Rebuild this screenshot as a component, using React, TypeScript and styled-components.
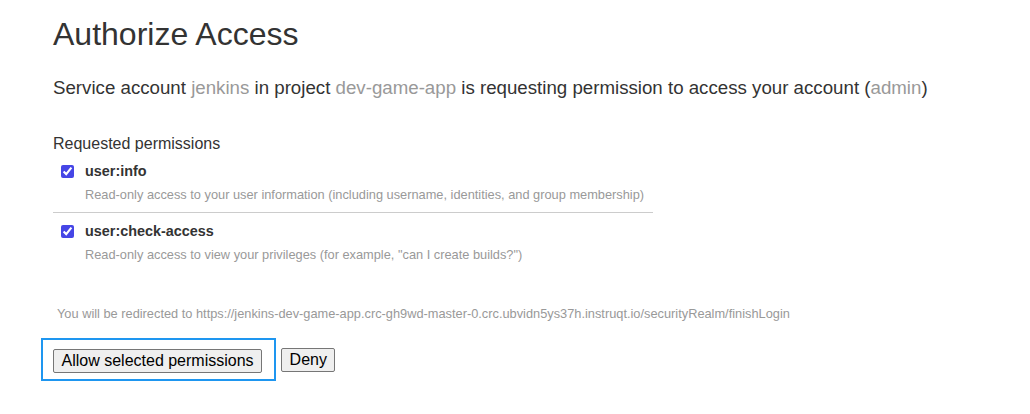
import React from "react";
import styled, { createGlobalStyle } from "styled-components";

const GlobalStyle = createGlobalStyle`
  body {
    margin: 0;
    background: #ffffff;
    font-family: "Liberation Sans", Arial, sans-serif;
    color: #333333;
  }
`;

const Page = styled.div`
  padding: 14px 53px 0;
`;

const Title = styled.h1`
  margin: 0;
  font-size: 32px;
  font-weight: 400;
  line-height: 40px;
  color: #333333;
`;

const Lead = styled.p`
  margin: 22px 0 0;
  font-size: 18.7px;
  line-height: 24px;
`;

const Muted = styled.span`
  color: #999999;
`;

const SectionTitle = styled.h3`
  margin: 33px 0 0;
  font-size: 16px;
  font-weight: 400;
  line-height: 22px;
`;

const PermissionList = styled.div`
  width: 600px;
  margin-top: 6px;
`;

const PermissionItem = styled.div`
  padding: 0 0 8px;
  & + & {
    border-top: 1px solid #cccccc;
    padding-top: 8px;
  }
`;

const PermissionLabel = styled.label`
  display: flex;
  align-items: center;
  gap: 11px;
  padding-left: 8px;
  font-size: 14.4px;
  font-weight: 700;
  line-height: 20px;
  color: #333333;
`;

const Checkbox = styled.input`
  margin: 0;
  width: 13px;
  height: 13px;
  accent-color: #4646e6;
`;

const Description = styled.div`
  margin-top: 5px;
  padding-left: 32px;
  font-size: 12.8px;
  line-height: 18px;
  color: #999999;
`;

const Redirect = styled.p`
  margin: 33px 0 0 4px;
  font-size: 12.8px;
  line-height: 18px;
  color: #999999;
`;

const Actions = styled.div`
  display: flex;
  align-items: center;
  gap: 5px;
  margin: 15px 0 0 -12px;
`;

const FocusBox = styled.div`
  border: 2px solid #1e96f0;
  padding: 9px 12px 6px 10px;
`;

const Button = styled.button`
  font-family: "Liberation Sans", Arial, sans-serif;
  font-size: 16px;
  line-height: 18px;
  height: 24px;
  padding: 1px 7.5px;
  color: #000000;
  background: #efefef;
  border: 1px solid #767676;
  border-radius: 2px;
`;

const permissions = [
  {
    name: "user:info",
    text: "Read-only access to your user information (including username, identities, and group membership)",
  },
  {
    name: "user:check-access",
    text: 'Read-only access to view your privileges (for example, "can I create builds?")',
  },
];

export default function App() {
  return (
    <>
      <GlobalStyle />
      <Page>
        <Title>Authorize Access</Title>
        <Lead>
          Service account <Muted>jenkins</Muted> in project <Muted>dev-game-app</Muted> is
          requesting permission to access your account (<Muted>admin</Muted>)
        </Lead>
        <SectionTitle>Requested permissions</SectionTitle>
        <PermissionList>
          {permissions.map((p) => (
            <PermissionItem key={p.name}>
              <PermissionLabel>
                <Checkbox type="checkbox" defaultChecked />
                {p.name}
              </PermissionLabel>
              <Description>{p.text}</Description>
            </PermissionItem>
          ))}
        </PermissionList>
        <Redirect>
          You will be redirected to
          https://jenkins-dev-game-app.crc-gh9wd-master-0.crc.ubvidn5ys37h.instruqt.io/securityRealm/finishLogin
        </Redirect>
        <Actions>
          <FocusBox>
            <Button type="button">Allow selected permissions</Button>
          </FocusBox>
          <Button type="button">Deny</Button>
        </Actions>
      </Page>
    </>
  );
}
